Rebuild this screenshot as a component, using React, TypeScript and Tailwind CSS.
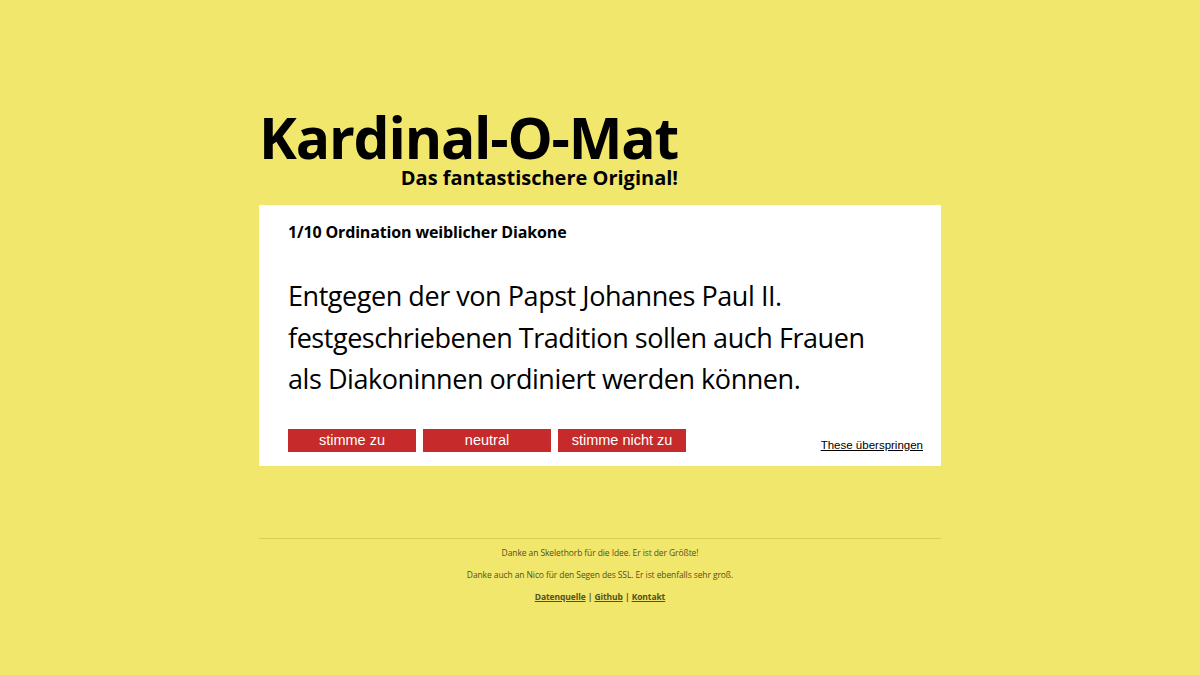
const answers = ['stimme zu', 'neutral', 'stimme nicht zu']

function Header() {
  return (
    <div className="inline-flex flex-col items-end">
      <h1 className="text-[57px] font-bold leading-[58px] tracking-[-1.2px] text-black">Kardinal-O-Mat</h1>
      <p className="text-[20px] font-bold leading-6 text-black">Das fantastischere Original!</p>
    </div>
  )
}

function ThesisCard() {
  return (
    <div className="bg-white pl-[29px] pr-[18px] pt-[15px] pb-[14px] mt-[15px]">
      <h2 className="text-[16px] font-bold leading-6 tracking-[-0.15px] text-black">1/10 Ordination weiblicher Diakone</h2>
      <p className="mt-[31px] pr-[40px] text-[27px] leading-[41.5px] tracking-[-0.45px] text-black">
        Entgegen der von Papst Johannes Paul II. festgeschriebenen Tradition sollen auch Frauen als Diakoninnen ordiniert werden können.
      </p>
      <div className="mt-[29px] flex items-end justify-between">
        <div className="flex gap-[7px]">
          {answers.map((a) => (
            <button
              key={a}
              className="w-[128px] h-[23px] bg-[#c62a2a] text-white text-[14.5px] leading-[23px] font-['Liberation_Sans',Arial,sans-serif]"
            >
              {a}
            </button>
          ))}
        </div>
        <a className="text-[11.5px] text-black underline font-['Liberation_Sans',Arial,sans-serif] leading-4 -mb-[1px]">
          These überspringen
        </a>
      </div>
    </div>
  )
}

function Footer() {
  return (
    <footer className="mt-[72px] border-t border-[#d9cf5a] pt-[7px] text-center text-[8.5px] tracking-[-0.1px] text-[#545020]">
      <p className="leading-[14px]">Danke an Skelethorb für die Idee. Er ist der Größte!</p>
      <p className="mt-[8px] leading-[14px]">Danke auch an Nico für den Segen des SSL. Er ist ebenfalls sehr groß.</p>
      <p className="mt-[8px] leading-[14px] font-bold">
        <a className="underline">Datenquelle</a> | <a className="underline">Github</a> | <a className="underline">Kontakt</a>
      </p>
    </footer>
  )
}

export default function App() {
  return (
    <div className="min-h-[675px] w-full bg-[#f2e76d] font-['Open_Sans','Noto_Sans',sans-serif]">
      <div className="mx-auto w-[682px] pt-[108px]">
        <Header />
        <ThesisCard />
        <Footer />
      </div>
    </div>
  )
}
